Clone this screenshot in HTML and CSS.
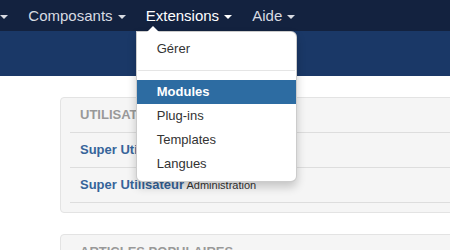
FILE: index.html
```html
<!DOCTYPE html>
<html lang="fr">
<head>
    <meta charset="UTF-8">
    <title>Administration</title>
    <link rel="stylesheet" href="styles.css">
</head>
<body>
<div class="page">
    <div class="navbar">
        <ul class="nav">
            <li class="nav-item">Utilisateurs <span class="caret"></span></li>
            <li class="nav-item">Composants <span class="caret"></span></li>
            <li class="nav-item active">Extensions <span class="caret"></span>
                <ul class="dropdown">
                    <li class="dropdown-item">Gérer</li>
                    <li class="divider"></li>
                    <li class="dropdown-item selected">Modules</li>
                    <li class="dropdown-item">Plug-ins</li>
                    <li class="dropdown-item">Templates</li>
                    <li class="dropdown-item">Langues</li>
                </ul>
            </li>
            <li class="nav-item">Aide <span class="caret"></span></li>
        </ul>
    </div>
    <div class="header"></div>
    <div class="content">
        <div class="well">
            <div class="well-row well-title">Utilisateurs connectés</div>
            <div class="well-row"><a class="user">Super Utilisateur</a> <small>Site</small></div>
            <div class="well-row"><a class="user">Super Utilisateur</a> <small>Administration</small></div>
        </div>
        <div class="well">
            <div class="well-row well-title">Articles populaires</div>
            <div class="well-row"><a class="user">Bienvenue</a></div>
        </div>
    </div>
</div>
</body>
</html>
```

FILE: styles.css
```css
body {
    margin: 0;
    font-family: "Liberation Sans", Arial, sans-serif;
    background-color: #fff;
    color: #333;
}

.page {
    width: 450px;
    height: 250px;
    overflow: hidden;
}

.navbar {
    background-color: #13223f;
    height: 31px;
    position: relative;
    z-index: 10;
}

.nav {
    list-style: none;
    margin: 0 0 0 -89px;
    padding: 0;
    display: flex;
}

.nav-item {
    position: relative;
    padding: 0 10px;
    line-height: 31px;
    font-size: 15px;
    color: #d8dbe2;
    white-space: nowrap;
}

.nav-item.active {
    color: #fff;
}

.caret {
    display: inline-block;
    width: 0;
    height: 0;
    margin-left: 1px;
    vertical-align: middle;
    border-top: 4px solid currentColor;
    border-left: 4px solid transparent;
    border-right: 4px solid transparent;
}

.dropdown {
    position: absolute;
    top: 100%;
    left: 0;
    width: 159px;
    margin: 0;
    padding: 5px 0;
    list-style: none;
    background-color: #fff;
    border: 1px solid rgba(0, 0, 0, 0.2);
    border-radius: 0 6px 6px 6px;
    box-shadow: 0 5px 10px rgba(0, 0, 0, 0.2);
}

.dropdown:after {
    content: "";
    position: absolute;
    top: -6px;
    left: 10px;
    border-left: 6px solid transparent;
    border-right: 6px solid transparent;
    border-bottom: 6px solid #fff;
}

.dropdown-item {
    padding: 3px 20px;
    line-height: 18px;
    font-size: 13px;
    color: #333;
}

.dropdown-item.selected {
    background-color: #2d6ca2;
    color: #fff;
    font-weight: bold;
}

.divider {
    height: 1px;
    margin: 9px 1px 8px;
    background-color: #e5e5e5;
    border-bottom: 1px solid #fff;
}

.header {
    background-color: #1a3867;
    height: 45px;
}

.content {
    padding: 21px 0 0 60px;
}

.well {
    width: 420px;
    margin-bottom: 21px;
    padding: 0 0 9px 9px;
    background-color: #f5f5f5;
    border: 1px solid #e3e3e3;
    border-radius: 4px;
}

.well-row {
    height: 34px;
    line-height: 34px;
    padding-left: 10px;
    border-bottom: 1px solid #ddd;
    font-size: 11px;
    white-space: nowrap;
}

.well-row small {
    font-size: 11px;
}

.well-title {
    font-size: 13px;
    font-weight: bold;
    color: #999;
    text-transform: uppercase;
}

.user {
    font-size: 13px;
    font-weight: bold;
    color: #36649a;
}
```
